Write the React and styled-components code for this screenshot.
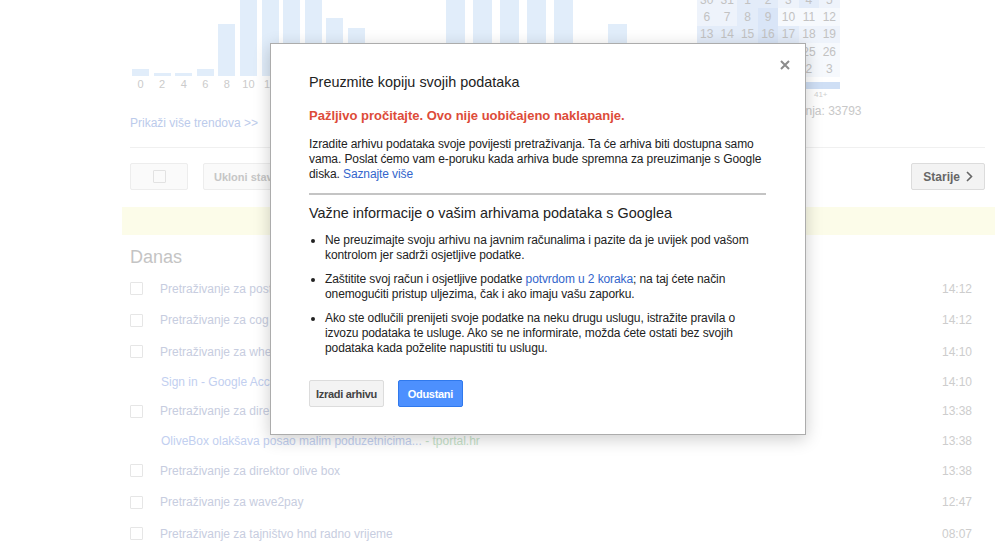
import styled, { createGlobalStyle } from "styled-components";

const GlobalStyle = createGlobalStyle`
  html, body {
    margin: 0;
    padding: 0;
    background: #fff;
    font-family: "Liberation Sans", Arial, sans-serif;
    overflow: hidden;
  }
`;

const Page = styled.div`
  position: relative;
  width: 1000px;
  height: 554px;
  box-sizing: border-box;
  padding: 0 15px 0 130px;
  overflow: hidden;
`;

const TopSection = styled.div`
  display: flex;
  height: 147px;
`;

const ChartBlock = styled.div`
  display: flex;
  flex-direction: column;
  margin-left: ${(p) => p.$offset}px;
`;

const Bars = styled.div`
  display: flex;
  align-items: flex-end;
  gap: ${(p) => p.$gap}px;
  height: 76px;
  overflow: hidden;
`;

const Bar = styled.div`
  width: ${(p) => p.$w}px;
  background: #e1edfa;
  flex-shrink: 0;
`;

const Labels = styled.div`
  display: flex;
  gap: ${(p) => p.$gap}px;
  margin-top: 1px;
`;

const AxisLabel = styled.span`
  width: ${(p) => p.$w}px;
  flex-shrink: 0;
  text-align: center;
  font-size: 11px;
  line-height: 14px;
  color: #cbcbcb;
`;

const TrendLink = styled.a`
  margin: 25px 0 0 -2px;
  font-size: 12px;
  line-height: 15px;
  color: #bccbeb;
  text-decoration: none;
  white-space: nowrap;
`;

const CalendarBlock = styled.div`
  display: flex;
  flex-direction: column;
  width: 143px;
  margin-left: 70px;
  margin-top: -9px;
`;

const CalendarGrid = styled.div`
  display: grid;
  grid-template-columns: repeat(7, 1fr);
  grid-auto-rows: 17.3px;
  background: #f6f9fd;
`;

const Day = styled.span`
  display: flex;
  align-items: center;
  justify-content: center;
  font-size: 12px;
  color: #c2c2c2;
  background: ${(p) => p.$bg};
`;

const Scale = styled.div`
  height: 7px;
  margin-top: 5px;
  background: #cfdff5;
`;

const ScaleLabels = styled.div`
  display: flex;
  justify-content: space-between;
  padding: 0 12px 0 4px;
  font-size: 8px;
  line-height: 11px;
  color: #cfcfcf;
`;

const Total = styled.div`
  margin-top: 4px;
  margin-right: -22px;
  text-align: right;
  white-space: nowrap;
  font-size: 12px;
  line-height: 15px;
  color: #c8c8c8;
`;

const Divider = styled.div`
  height: 1px;
  background: #f0f0f0;
`;

const Toolbar = styled.div`
  display: flex;
  align-items: center;
  gap: 15px;
  margin-top: 15px;
  height: 27px;
`;

const ToolButton = styled.div`
  display: flex;
  align-items: center;
  justify-content: center;
  gap: 6px;
  box-sizing: border-box;
  height: 27px;
  min-width: ${(p) => p.$min || 0}px;
  padding: 0 ${(p) => (p.$active ? 11 : 10)}px;
  border: 1px solid ${(p) => (p.$active ? "#dcdcdc" : "#ededed")};
  border-radius: 2px;
  background: ${(p) => (p.$active ? "#f3f3f3" : "#fafafa")};
  font-size: ${(p) => (p.$active ? 12 : 11)}px;
  font-weight: bold;
  color: ${(p) => (p.$active ? "#666" : "#c6c6c6")};
  white-space: nowrap;
  margin-left: ${(p) => (p.$right ? "auto" : "0")};
`;

const Checkbox = styled.span`
  display: inline-block;
  width: 11px;
  height: 11px;
  border: 1px solid ${(p) => p.$color || "#e6e6e6"};
  border-radius: 1px;
  flex-shrink: 0;
`;

const Notice = styled.div`
  height: 28px;
  margin: 17px -10px 0 -8px;
  background: #fcfce9;
`;

const DayTitle = styled.h2`
  margin: 11px 0 5px;
  font-size: 18px;
  font-weight: normal;
  line-height: 22px;
  color: #c4c4c4;
`;

const Row = styled.div`
  display: flex;
  align-items: center;
  height: ${(p) => (p.$link ? 28 : 31.5)}px;
  font-size: 12px;
`;

const CheckSlot = styled.div`
  width: ${(p) => (p.$link ? 31 : 30)}px;
  flex-shrink: 0;
  display: flex;
`;

const RowText = styled.span`
  flex: 1;
  white-space: nowrap;
  color: ${(p) => (p.$link ? "#c2cff0" : "#c7cde0")};
`;

const Source = styled.span`
  color: #c6e2c9;
`;

const Time = styled.span`
  width: 40px;
  padding-right: 13px;
  text-align: right;
  color: #cdcdcd;
`;

const Modal = styled.div`
  position: absolute;
  left: 270px;
  top: 43px;
  width: 536px;
  box-sizing: border-box;
  padding: 28px 39px 27px 38px;
  background: #fff;
  border: 1px solid #acacac;
  box-shadow: 0 4px 16px rgba(0, 0, 0, 0.2);
  color: #222;
`;

const Close = styled.button`
  position: absolute;
  top: 16px;
  right: 15px;
  width: 10px;
  height: 10px;
  padding: 0;
  border: 0;
  background: none;
  display: flex;
`;

const ModalTitle = styled.h1`
  margin: 0;
  font-size: 14.4px;
  font-weight: normal;
  line-height: 20px;
`;

const Warning = styled.p`
  margin: 15px 0 0;
  font-size: 13px;
  font-weight: bold;
  line-height: 17px;
  color: #dd4b39;
`;

const Text = styled.p`
  margin: 13px 0 0;
  font-size: 12px;
  line-height: 15px;
  letter-spacing: -0.1px;
`;

const Link = styled.a`
  color: #3366cc;
  text-decoration: none;
`;

const Rule = styled.div`
  height: 2px;
  margin-top: 11px;
  background: #c4c4c4;
`;

const SubTitle = styled.h2`
  margin: 8px 0 0;
  font-size: 14.4px;
  font-weight: normal;
  line-height: 20px;
`;

const InfoList = styled.ul`
  margin: 10px 0 0;
  padding: 0 0 0 16px;
  font-size: 12px;
  line-height: 15px;
  letter-spacing: -0.1px;
`;

const InfoItem = styled.li`
  & + & {
    margin-top: 9px;
  }
`;

const Actions = styled.div`
  display: flex;
  gap: 14px;
  margin-top: 24px;
`;

const ActionButton = styled.button`
  box-sizing: border-box;
  height: 27px;
  min-width: 65px;
  padding: 0 6px;
  border-radius: 2px;
  font-family: inherit;
  font-size: 11px;
  font-weight: bold;
  letter-spacing: -0.3px;
  border: 1px solid ${(p) => (p.$primary ? "#3079ed" : "#dcdcdc")};
  background: ${(p) => (p.$primary ? "#4d90fe" : "#f3f3f3")};
  color: ${(p) => (p.$primary ? "#fff" : "#444")};
`;

const hourBars = [7, 3, 3, 7, 52, 120, 120, 120, 120, 58, 48, 30];
const hourLabels = ["0", "2", "4", "6", "8", "10", "12", "14", "16", "18", "20", "22"];
const dayBars = [120, 120, 120, 120, 120, 0, 52];
const dayLabels = ["P", "U", "S", "Č", "P", "S", "N"];

const light = "#eef3fb";
const mid = "#e3ecf9";
const strong = "#d9e5f7";
const none = "transparent";

const calendar = [
  [["30", light], ["31", light], ["1", mid], ["2", mid], ["3", light], ["4", mid], ["5", light]],
  [["6", light], ["7", light], ["8", mid], ["9", strong], ["10", none], ["11", none], ["12", none]],
  [["13", mid], ["14", mid], ["15", mid], ["16", strong], ["17", mid], ["18", light], ["19", light]],
  [["20", mid], ["21", mid], ["22", mid], ["23", mid], ["24", light], ["25", none], ["26", none]],
  [["27", light], ["28", light], ["29", light], ["30", light], ["1", none], ["2", none], ["3", none]],
];

const rows = [
  { text: "Pretraživanje za postavke privatnosti", time: "14:12" },
  { text: "Pretraživanje za cog prodaja", time: "14:12" },
  { text: "Pretraživanje za where is my data", time: "14:10" },
  { text: "Sign in - Google Accounts", time: "14:10", link: true },
  { text: "Pretraživanje za direktor olivebox", time: "13:38" },
  { text: "OliveBox olakšava posao malim poduzetnicima...", source: " - tportal.hr", time: "13:38", link: true },
  { text: "Pretraživanje za direktor olive box", time: "13:38" },
  { text: "Pretraživanje za wave2pay", time: "12:47" },
  { text: "Pretraživanje za tajništvo hnd radno vrijeme", time: "08:07" },
];

const CloseIcon = () => (
  <svg width="10" height="10" viewBox="0 0 10 10">
    <path d="M1 1 L9 9 M9 1 L1 9" stroke="#8c8c8c" strokeWidth="2" />
  </svg>
);

const Chevron = () => (
  <svg width="7" height="11" viewBox="0 0 7 11">
    <path d="M1 1 L5.5 5.5 L1 10" fill="none" stroke="#666" strokeWidth="1.6" />
  </svg>
);

const App = () => {
  return (
    <>
      <GlobalStyle />
      <Page>
        <TopSection>
          <ChartBlock $offset={2}>
            <Bars $gap={4.6}>
              {hourBars.map((h, i) => (
                <Bar key={i} $w={17} style={{ height: h }} />
              ))}
            </Bars>
            <Labels $gap={4.6}>
              {hourLabels.map((l) => (
                <AxisLabel key={l} $w={17}>{l}</AxisLabel>
              ))}
            </Labels>
            <TrendLink>Prikaži više trendova &gt;&gt;</TrendLink>
          </ChartBlock>
          <ChartBlock $offset={59}>
            <Bars $gap={8}>
              {dayBars.map((h, i) => (
                <Bar key={i} $w={19} style={{ height: h }} />
              ))}
            </Bars>
            <Labels $gap={8}>
              {dayLabels.map((l, i) => (
                <AxisLabel key={i} $w={19}>{l}</AxisLabel>
              ))}
            </Labels>
          </ChartBlock>
          <CalendarBlock>
            <CalendarGrid>
              {calendar.flat().map(([d, bg], i) => (
                <Day key={i} $bg={bg}>{d}</Day>
              ))}
            </CalendarGrid>
            <Scale />
            <ScaleLabels>
              <span>1</span>
              <span>41+</span>
            </ScaleLabels>
            <Total>Ukupno pretraživanja: 33793</Total>
          </CalendarBlock>
        </TopSection>
        <Divider />
        <Toolbar>
          <ToolButton $min={58}>
            <Checkbox $color="#e2e2e2" />
          </ToolButton>
          <ToolButton>Ukloni stavke</ToolButton>
          <ToolButton $active $right>
            Starije <Chevron />
          </ToolButton>
        </Toolbar>
        <Notice />
        <DayTitle>Danas</DayTitle>
        {rows.map((r, i) => (
          <Row key={i} $link={r.link}>
            <CheckSlot $link={r.link}>{!r.link && <Checkbox />}</CheckSlot>
            <RowText $link={r.link}>
              {r.text}
              {r.source && <Source>{r.source}</Source>}
            </RowText>
            <Time>{r.time}</Time>
          </Row>
        ))}

        <Modal>
          <Close aria-label="Zatvori">
            <CloseIcon />
          </Close>
          <ModalTitle>Preuzmite kopiju svojih podataka</ModalTitle>
          <Warning>Pažljivo pročitajte. Ovo nije uobičajeno naklapanje.</Warning>
          <Text>
            Izradite arhivu podataka svoje povijesti pretraživanja. Ta će arhiva biti dostupna samo
            vama. Poslat ćemo vam e-poruku kada arhiva bude spremna za preuzimanje s Google
            diska. <Link>Saznajte više</Link>
          </Text>
          <Rule />
          <SubTitle>Važne informacije o vašim arhivama podataka s Googlea</SubTitle>
          <InfoList>
            <InfoItem>
              Ne preuzimajte svoju arhivu na javnim računalima i pazite da je uvijek pod vašom
              kontrolom jer sadrži osjetljive podatke.
            </InfoItem>
            <InfoItem>
              Zaštitite svoj račun i osjetljive podatke <Link>potvrdom u 2 koraka</Link>; na taj
              ćete način onemogućiti pristup uljezima, čak i ako imaju vašu zaporku.
            </InfoItem>
            <InfoItem>
              Ako ste odlučili prenijeti svoje podatke na neku drugu uslugu, istražite pravila o
              izvozu podataka te usluge. Ako se ne informirate, možda ćete ostati bez svojih
              podataka kada poželite napustiti tu uslugu.
            </InfoItem>
          </InfoList>
          <Actions>
            <ActionButton>Izradi arhivu</ActionButton>
            <ActionButton $primary>Odustani</ActionButton>
          </Actions>
        </Modal>
      </Page>
    </>
  );
};

export default App;
